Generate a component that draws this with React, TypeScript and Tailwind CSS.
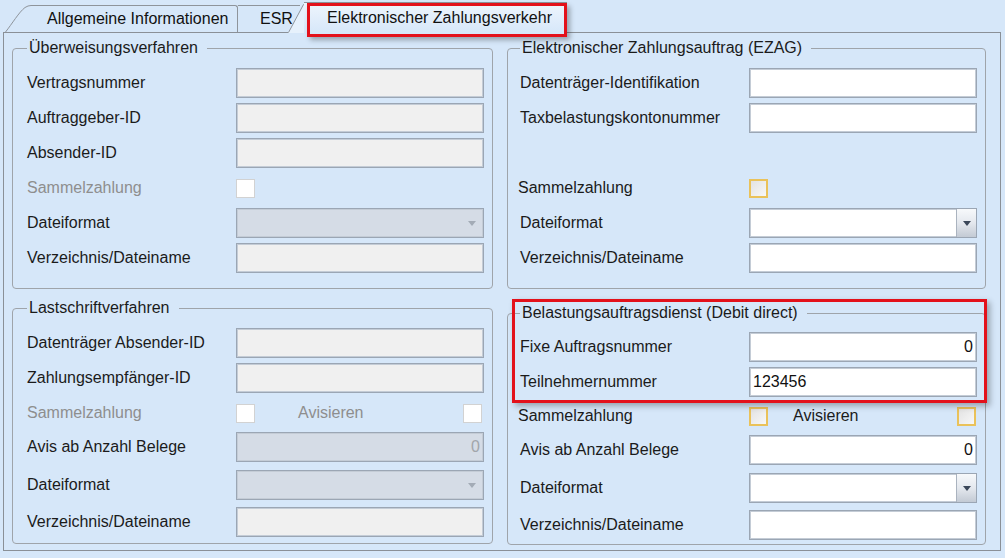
import type { ReactNode } from "react";

const BG = "bg-[#d6e7f9]";

function Arrow({ dim }: { dim?: boolean }) {
  return (
    <svg width="8" height="5" viewBox="0 0 8 5">
      <path d="M0 0h8L4 5z" fill={dim ? "#a3abb6" : "#3b4759"} />
    </svg>
  );
}

function TextBox({ value, tone = "on", right }: { value?: string; tone?: "on" | "off" | "offBlue"; right?: boolean }) {
  const look =
    tone === "on"
      ? "bg-white text-[#111]"
      : tone === "off"
        ? "bg-[#f0f0f0] text-[#999]"
        : "bg-[#d5dce6] text-[#a2a6ab]";
  return (
    <div
      className={`flex h-[30px] w-full items-center border border-[#9ba6b4] px-[3px] shadow-[inset_0_0_0_1px_#c4ccd6] ${look} ${right ? "justify-end" : ""}`}
    >
      {value}
    </div>
  );
}

function Combo({ disabled }: { disabled?: boolean }) {
  if (disabled) {
    return (
      <div className="flex h-[30px] w-full items-center justify-end border border-[#9ba6b4] bg-[#d5dce6] pr-[7px] shadow-[inset_0_0_0_1px_#c4ccd6]">
        <Arrow dim />
      </div>
    );
  }
  return (
    <div className="flex h-[30px] w-full border border-[#9ba6b4] bg-white shadow-[inset_0_0_0_1px_#c4ccd6]">
      <div className="flex-1" />
      <div className="flex w-[20px] items-center justify-center border-l border-[#aab3bf] bg-gradient-to-b from-[#f7f9fb] via-[#e4e8ee] to-[#c3cad4]">
        <Arrow />
      </div>
    </div>
  );
}

function Check({ on }: { on?: boolean }) {
  return on ? (
    <div className="h-[19px] w-[19px] shrink-0 bg-gradient-to-br from-[#e0e0e0] to-[#fafafa] shadow-[inset_0_0_0_2px_#eac25a]" />
  ) : (
    <div className="h-[19px] w-[19px] shrink-0 border border-[#d2d2d2] bg-white" />
  );
}

function Row({
  label,
  labelClass,
  dim,
  className = "",
  children,
}: {
  label: string;
  labelClass: string;
  dim?: boolean;
  className?: string;
  children?: ReactNode;
}) {
  return (
    <div className={`flex h-[30px] items-center ${className}`}>
      <span className={`shrink-0 whitespace-nowrap ${labelClass} ${dim ? "text-[#8e8e8e]" : "text-[#1b1b1b]"}`}>{label}</span>
      <div className="flex min-w-0 flex-1 items-center">{children}</div>
    </div>
  );
}

function Group({ title, className, children }: { title: string; className: string; children: ReactNode }) {
  return (
    <fieldset className={`rounded-[4px] border border-[#9fa4aa] ${className}`}>
      <legend className="pl-[2px] pr-[9px] leading-[18px] text-[#1b1b1b]">{title}</legend>
      {children}
    </fieldset>
  );
}

function Tabs() {
  return (
    <div className="flex h-[32px] items-end pl-[5px] text-[#111]">
      <div className="flex h-[27px] shrink-0">
        <svg width="26" height="27" viewBox="0 0 26 27" className="shrink-0">
          <path d="M0.5 27 C 7 19, 14 7, 20 2.5 Q 23 0.5 26 0.5 L26 27Z" fill="#d6e7f9" />
          <path d="M0.5 27 C 7 19, 14 7, 20 2.5 Q 23 0.5 26 0.5" fill="none" stroke="#8e949b" />
        </svg>
        <div className="flex w-[207px] shrink-0 items-center whitespace-nowrap rounded-tr-[3px] border-t border-r border-[#8e949b] pl-[16px]">
          Allgemeine Informationen
        </div>
      </div>
      <div className="flex h-[27px] w-[62px] shrink-0 items-center border-t border-[#8e949b] pl-[22px]">ESR</div>
      <div className="relative z-10 -mb-px -ml-[12px] flex h-[31px] shrink-0">
        <svg width="16" height="31" viewBox="0 0 16 31" className="shrink-0">
          <path d="M0 31 L15.5 2.5 L16 2.5 L16 31Z" fill="#e6f1fc" />
          <path d="M0.5 30.5 L15.5 2.5 L16 2.5" fill="none" stroke="#8e949b" />
        </svg>
        <div className="flex w-[263px] items-center whitespace-nowrap border-t border-r border-[#8e949b] bg-gradient-to-b from-[#eef5fd] to-[#d6e7f9] pl-[23px]">
          Elektronischer Zahlungsverkehr
        </div>
      </div>
    </div>
  );
}

export default function App() {
  const L = "w-[209px]";
  const R = "w-[229px]";
  const R2 = "-ml-[2px] w-[231px]";
  return (
    <div className={`relative h-[558px] w-[1005px] overflow-hidden ${BG} font-['Liberation_Sans',Arial,sans-serif] text-[16px]`}>
      <Tabs />
      <div className="ml-[3px] flex h-[519px] w-[998px] gap-[14px] border border-[#8a9097] pl-[8px]">
        {/* left column */}
        <div className="flex w-[481px] flex-col">
          <Group title="Überweisungsverfahren" className="mt-[6px] h-[250px] pl-[14px] pr-[8px]">
            <div className="flex flex-col gap-[5px] pt-[11px]">
              <Row label="Vertragsnummer" labelClass={L}><TextBox tone="off" /></Row>
              <Row label="Auftraggeber-ID" labelClass={L}><TextBox tone="off" /></Row>
              <Row label="Absender-ID" labelClass={L}><TextBox tone="off" /></Row>
              <Row label="Sammelzahlung" labelClass={L} dim><Check /></Row>
              <Row label="Dateiformat" labelClass={L}><Combo disabled /></Row>
              <Row label="Verzeichnis/Dateiname" labelClass={L}><TextBox tone="off" /></Row>
            </div>
          </Group>
          <Group title="Lastschriftverfahren" className="mt-[10px] h-[245px] pl-[14px] pr-[8px]">
            <div className="flex flex-col pt-[11px]">
              <Row label="Datenträger Absender-ID" labelClass={L}><TextBox tone="off" /></Row>
              <Row label="Zahlungsempfänger-ID" labelClass={L} className="mt-[5px]"><TextBox tone="off" /></Row>
              <Row label="Sammelzahlung" labelClass={L} dim className="mt-[5px]">
                <Check />
                <span className="ml-[43px] text-[#8e8e8e]">Avisieren</span>
                <div className="ml-auto mr-[2px]"><Check /></div>
              </Row>
              <Row label="Avis ab Anzahl Belege" labelClass={L} className="mt-[4px]"><TextBox tone="offBlue" value="0" right /></Row>
              <Row label="Dateiformat" labelClass={L} className="mt-[8px]"><Combo disabled /></Row>
              <Row label="Verzeichnis/Dateiname" labelClass={L} className="mt-[7px]"><TextBox tone="off" /></Row>
            </div>
          </Group>
        </div>
        {/* right column */}
        <div className="flex w-[479px] flex-col">
          <Group title="Elektronischer Zahlungsauftrag (EZAG)" className="mt-[6px] h-[250px] pl-[12px] pr-[8px]">
            <div className="flex flex-col gap-[5px] pt-[11px]">
              <Row label="Datenträger-Identifikation" labelClass={R}><TextBox /></Row>
              <Row label="Taxbelastungskontonummer" labelClass={R}><TextBox /></Row>
              <div className="h-[30px]" />
              <Row label="Sammelzahlung" labelClass={R2}><Check on /></Row>
              <Row label="Dateiformat" labelClass={R}><Combo /></Row>
              <Row label="Verzeichnis/Dateiname" labelClass={R}><TextBox /></Row>
            </div>
          </Group>
          <Group title="Belastungsauftragsdienst (Debit direct)" className="mt-[15px] h-[241px] pl-[12px] pr-[8px]">
            <div className="flex flex-col pt-[10px]">
              <Row label="Fixe Auftragsnummer" labelClass={R}><TextBox value="0" right /></Row>
              <Row label="Teilnehmernummer" labelClass={R} className="mt-[5px]"><TextBox value="123456" /></Row>
              <Row label="Sammelzahlung" labelClass={R2} className="mt-[4px]">
                <Check on />
                <span className="ml-[25px] text-[#1b1b1b]">Avisieren</span>
                <div className="ml-auto mr-[1px]"><Check on /></div>
              </Row>
              <Row label="Avis ab Anzahl Belege" labelClass={R} className="mt-[4px]"><TextBox value="0" right /></Row>
              <Row label="Dateiformat" labelClass={R} className="mt-[8px]"><Combo /></Row>
              <Row label="Verzeichnis/Dateiname" labelClass={R} className="mt-[7px]"><TextBox /></Row>
            </div>
          </Group>
        </div>
      </div>

      {/* red highlight marks */}
      <div className="pointer-events-none absolute left-[307px] top-[3px] z-20 h-[34px] w-[260px] border-[3px] border-[#e3111b] shadow-[3px_3px_5px_rgba(0,0,0,0.3)]" />
      <div className="pointer-events-none absolute left-[512px] top-[299px] z-20 h-[104px] w-[475px] border-[3px] border-[#e3111b] shadow-[3px_3px_6px_rgba(0,0,0,0.3)]" />
    </div>
  );
}
